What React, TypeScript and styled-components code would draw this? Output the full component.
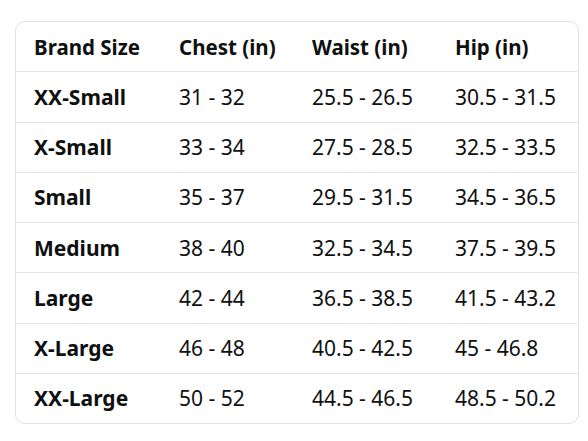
import React from "react";
import styled, { createGlobalStyle } from "styled-components";

const Global = createGlobalStyle`
  html, body { margin: 0; padding: 0; background: #ffffff; }
  body { font-family: "Noto Sans", "Open Sans", sans-serif; color: #0f1111; }
`;

const Page = styled.div`
  padding: 21px 10px 0 15px;
`;

const Card = styled.div`
  width: 562px;
  border: 1px solid #dfe2e2;
  border-radius: 10px;
  overflow: hidden;
  display: grid;
  grid-template-columns: 145px 133px 143px 1fr;
`;

const Cell = styled.div<{ $head?: boolean; $bold?: boolean; $last?: boolean }>`
  height: 49.25px;
  display: flex;
  align-items: center;
  padding-left: 18px;
  font-size: ${(p) => (p.$head ? "20.5px" : "21px")};
  font-weight: ${(p) => (p.$head || p.$bold ? 700 : 400)};
  border-bottom: ${(p) => (p.$last ? "none" : "1px solid #e3e6e6")};
  white-space: nowrap;
`;

const headers = ["Brand Size", "Chest (in)", "Waist (in)", "Hip (in)"];
const rows = [
  ["XX-Small", "31 - 32", "25.5 - 26.5", "30.5 - 31.5"],
  ["X-Small", "33 - 34", "27.5 - 28.5", "32.5 - 33.5"],
  ["Small", "35 - 37", "29.5 - 31.5", "34.5 - 36.5"],
  ["Medium", "38 - 40", "32.5 - 34.5", "37.5 - 39.5"],
  ["Large", "42 - 44", "36.5 - 38.5", "41.5 - 43.2"],
  ["X-Large", "46 - 48", "40.5 - 42.5", "45 - 46.8"],
  ["XX-Large", "50 - 52", "44.5 - 46.5", "48.5 - 50.2"],
];

export default function App() {
  return (
    <Page>
      <Global />
      <Card>
        {headers.map((h) => (
          <Cell key={h} $head>
            {h}
          </Cell>
        ))}
        {rows.map((r, i) =>
          r.map((c, j) => (
            <Cell key={`${i}-${j}`} $bold={j === 0} $last={i === rows.length - 1}>
              {c}
            </Cell>
          ))
        )}
      </Card>
    </Page>
  );
}
